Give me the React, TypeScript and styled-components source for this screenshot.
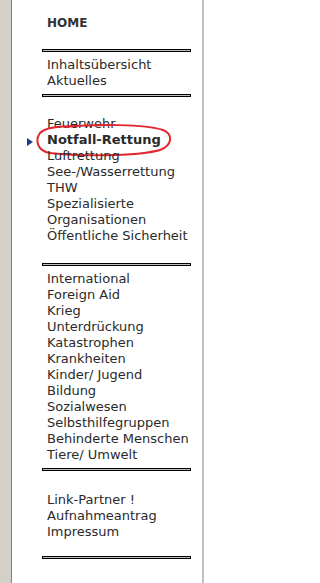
import React from "react";
import styled, { createGlobalStyle } from "styled-components";

const Global = createGlobalStyle`
  html, body { margin: 0; padding: 0; background: #ffffff; }
  body { font-family: "DejaVu Sans", Verdana, sans-serif; }
`;

const Page = styled.div`
  display: flex;
  min-height: 583px;
  width: 224px;
  overflow: hidden;
`;

const Gutter = styled.div`
  width: 11px;
  flex: none;
  background: #d4d0c8;
  border-right: 1px solid #808080;
`;

const Panel = styled.nav`
  width: 192px;
  flex: none;
  box-sizing: border-box;
  border-right: 2px solid #c0c0c0;
  padding: 15px 0 0 30px;
  display: flex;
  flex-direction: column;
`;

const Home = styled.a`
  display: block;
  padding-left: 5px;
  font-size: 12px;
  line-height: 16px;
  font-weight: bold;
  color: #333333;
  text-decoration: none;
`;

const Rule = styled.div<{ $top: number }>`
  width: 149px;
  height: 3px;
  box-sizing: border-box;
  border: 1px solid #000000;
  background: #c0c0c0;
  margin-top: ${(p) => p.$top}px;
`;

const List = styled.ul<{ $top: number }>`
  list-style: none;
  margin: ${(p) => p.$top}px 0 0 0;
  padding: 0 0 0 5px;
`;

const Item = styled.li<{ $active?: boolean }>`
  position: relative;
  font-size: 13px;
  line-height: 16px;
  height: 16px;
  white-space: nowrap;
  color: #2a2a2a;
  font-weight: ${(p) => (p.$active ? "bold" : "normal")};
  ${(p) =>
    p.$active &&
    `
    &::before {
      content: "";
      position: absolute;
      left: -20px;
      top: 6px;
      width: 0;
      height: 0;
      border-top: 4px solid transparent;
      border-bottom: 4px solid transparent;
      border-left: 6px solid #1d3d8c;
    }
  `}
`;

const Circle = styled.svg`
  position: absolute;
  left: -12px;
  top: -8px;
  width: 140px;
  height: 34px;
  pointer-events: none;
  overflow: visible;
`;

const Marking = () => (
  <Circle viewBox="35 124 140 34">
    <path
      d="M 66 127 C 95 124, 145 124, 163 130 C 173 134, 173 145, 160 150 C 135 157, 75 156, 50 153 C 37 151, 35 140, 40 133 C 45 128, 58 126, 75 126"
      fill="none"
      stroke="#e3262d"
      strokeWidth="2"
      strokeLinecap="round"
    />
  </Circle>
);

const sections: { top: number; items: string[]; rule: number }[] = [
  { top: 5, items: ["Inhaltsübersicht", "Aktuelles"], rule: 5 },
  {
    top: 19,
    items: [
      "Feuerwehr",
      "Notfall-Rettung",
      "Luftrettung",
      "See-/Wasserrettung",
      "THW",
      "Spezialisierte",
      "Organisationen",
      "Öffentliche Sicherheit",
    ],
    rule: 19,
  },
  {
    top: 5,
    items: [
      "International",
      "Foreign Aid",
      "Krieg",
      "Unterdrückung",
      "Katastrophen",
      "Krankheiten",
      "Kinder/ Jugend",
      "Bildung",
      "Sozialwesen",
      "Selbsthilfegruppen",
      "Behinderte Menschen",
      "Tiere/ Umwelt",
    ],
    rule: 5,
  },
  { top: 21, items: ["Link-Partner !", "Aufnahmeantrag", "Impressum"], rule: 16 },
];

export default function App() {
  return (
    <>
      <Global />
      <Page>
        <Gutter />
        <Panel>
          <Home>HOME</Home>
          <Rule $top={18} />
          {sections.map((s, i) => (
            <React.Fragment key={i}>
              <List $top={s.top}>
                {s.items.map((t) => {
                  const active = t === "Notfall-Rettung";
                  return (
                    <Item key={t} $active={active}>
                      {t}
                      {active && <Marking />}
                    </Item>
                  );
                })}
              </List>
              <Rule $top={s.rule} />
            </React.Fragment>
          ))}
        </Panel>
      </Page>
    </>
  );
}
